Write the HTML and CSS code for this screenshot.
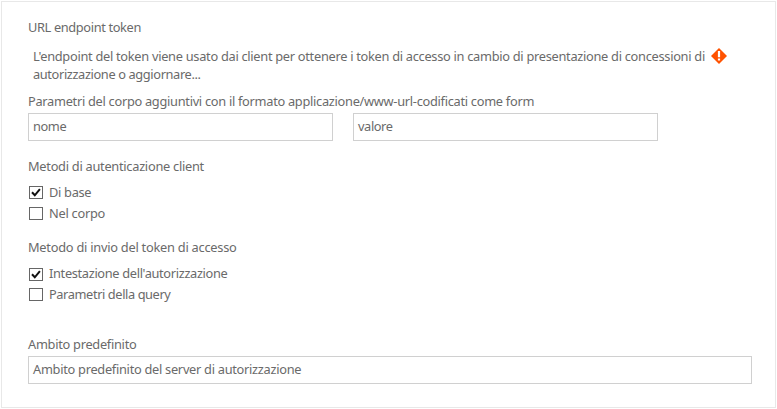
FILE: index.html
```html
<!DOCTYPE html>
<html lang="it">
<head>
<meta charset="utf-8">
<title>URL endpoint token</title>
<link rel="stylesheet" href="styles.css">
</head>
<body>
<main class="panel">
  <section class="endpoint">
    <h2 class="label"><span class="t-url">URL endpoint token</span></h2>
    <div class="notice">
      <p class="description"><span class="t-desc">L'endpoint del token viene usato dai client per ottenere i token di accesso in cambio di presentazione di concessioni di</span><br><span class="t-desc2">autorizzazione o aggiornare...</span></p>
      <svg class="alert" viewBox="0 0 16 16" aria-hidden="true"><path d="M8 0 16 8 8 16 0 8Z" fill="#ff5200"/><path d="M6.9 3h2.2v6.2H6.9zM6.9 10.5h2.2v2.1H6.9z" fill="#fff"/></svg>
    </div>
  </section>
  <section class="params">
    <h2 class="label"><span class="t-params">Parametri del corpo aggiuntivi con il formato applicazione/www-url-codificati come form</span></h2>
    <div class="fields">
      <div class="field"><span class="t-nome">nome</span></div>
      <div class="field"><span class="t-valore">valore</span></div>
    </div>
  </section>
  <section class="group methods">
    <h2 class="label"><span class="t-methods">Metodi di autenticazione client</span></h2>
    <div class="option"><svg class="box" viewBox="0 0 14 13"><rect x=".5" y=".5" width="13" height="12"/><path d="M3 6.3 5.8 9.3 10.9 3.2"/></svg><span class="t-base">Di base</span></div>
    <div class="option"><svg class="box" viewBox="0 0 14 13"><rect x=".5" y=".5" width="13" height="12"/></svg><span class="t-corpo">Nel corpo</span></div>
  </section>
  <section class="group sending">
    <h2 class="label"><span class="t-sending">Metodo di invio del token di accesso</span></h2>
    <div class="option"><svg class="box" viewBox="0 0 14 13"><rect x=".5" y=".5" width="13" height="12"/><path d="M3 6.3 5.8 9.3 10.9 3.2"/></svg><span class="t-header">Intestazione dell'autorizzazione</span></div>
    <div class="option"><svg class="box" viewBox="0 0 14 13"><rect x=".5" y=".5" width="13" height="12"/></svg><span class="t-query">Parametri della query</span></div>
  </section>
  <section class="scope">
    <h2 class="label"><span class="t-scope">Ambito predefinito</span></h2>
    <div class="field"><span class="t-scope-value">Ambito predefinito del server di autorizzazione</span></div>
  </section>
</main>
</body>
</html>
```
FILE: styles.css
```css
* { box-sizing: border-box; }
body {
  margin: 0;
  background: #fff;
  color: #6a6a6a;
  font: 12.8px/18px "Noto Sans", "Open Sans", sans-serif;
}
.panel {
  width: 775px;
  height: 407px;
  margin: 1px;
  padding: 16px 23px 0 26px;
  border: 1px solid #e8e8e8;
}
.label, .description { margin: 0; font-size: inherit; font-weight: 400; white-space: nowrap; }
.label { height: 18px; }
.notice { display: flex; margin-top: 11px; padding-left: 5px; }
.description { width: 678px; }
.alert { flex: none; width: 16px; height: 16px; margin-top: 1px; }
.params { margin-top: 9px; }
.fields { display: grid; grid-template-columns: 305px 305px; gap: 20px; }
.label + .fields, .label + .field { margin-top: 3px; }
.field { height: 28px; padding: 3px 4px; border: 1px solid #d0d0d0; white-space: nowrap; }
.group { margin-top: 16px; }
.option { display: flex; align-items: flex-start; gap: 6px; height: 18px; margin: 3px 0 0 1px; white-space: nowrap; }
.label + .option { margin-top: 8px; }
.box { width: 14px; height: 13px; margin-top: 3px; fill: none; stroke: #666; }
.box path { stroke: #111; stroke-width: 2; }
.sending .label + .option .box { margin-top: 4px; }
.scope { margin-top: 32px; }

.t-url { letter-spacing: -.36px; }
.t-desc { letter-spacing: -.285px; }
.t-desc2 { letter-spacing: -.37px; }
.t-params { letter-spacing: -.285px; }
.t-nome, .t-valore { letter-spacing: -.4px; }
.t-methods { letter-spacing: -.27px; }
.t-base { letter-spacing: -.3px; }
.t-corpo { letter-spacing: -.25px; }
.t-sending { letter-spacing: -.24px; }
.t-header { letter-spacing: -.33px; }
.t-query { letter-spacing: -.4px; }
.t-scope, .t-scope-value { letter-spacing: -.28px; }
```
